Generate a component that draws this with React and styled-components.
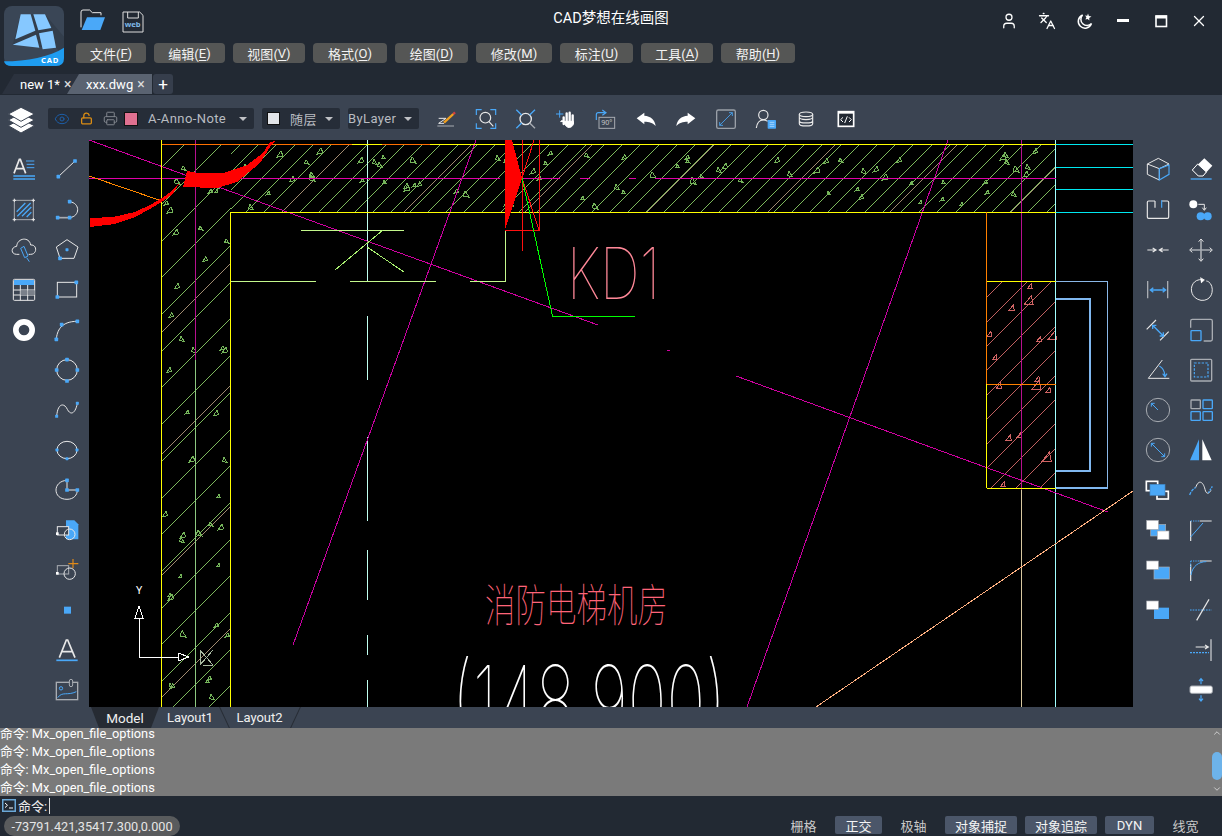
import React from 'react';
import styled, { createGlobalStyle } from 'styled-components';
import { User, Languages, X, Eye, LockOpen, Printer, ChevronUp, ChevronDown } from 'lucide-react';

const BLUE = '#4aa8f8';
const WHITE = '#e8e8e8';
const GRAY = '#a8acb2';
const FONT = 'Roboto, "Noto Sans CJK SC", sans-serif';

const GlobalStyle = createGlobalStyle`
  html, body { margin: 0; padding: 0; background: #222933; }
  * { box-sizing: border-box; }
`;

// --- layout ---
const Page = styled.div`
  width: 1222px;
  height: 836px;
  display: flex;
  flex-direction: column;
  overflow: hidden;
  background: #222933;
  color: #fff;
  font-family: ${FONT};
`;
const Header = styled.header`
  height: 74px;
  display: grid;
  grid-template-columns: 76px 1fr auto 1fr 76px;
  grid-template-rows: 42px 32px;
`;
const LogoBox = styled.div`
  grid-row: 1 / span 2;
  padding: 6px 0 0 4px;
`;
const QuickIcons = styled.div`
  display: flex;
  align-items: center;
  gap: 14px;
  padding: 1px 0 0 3px;
`;
const Title = styled.div`
  font-size: 14.5px;
  line-height: 38px;
`;
const WindowControls = styled.div`
  grid-column: 4 / span 2;
  display: flex;
  justify-content: flex-end;
  align-items: flex-start;
  gap: 14px;
  padding: 9px 11px 0 0;
`;
const WinIcon = styled.span`
  width: 24px;
  height: 24px;
  display: flex;
  align-items: center;
  justify-content: center;
`;
const MenuBar = styled.nav`
  grid-column: 2 / -1;
  display: flex;
  gap: 8px;
  padding-top: 1px;
`;
const MenuButton = styled.div`
  width: ${(p) => p.$w}px;
  height: 20px;
  display: flex;
  align-items: center;
  justify-content: center;
  background: #555655;
  border-radius: 4px;
  font-size: 13px;
  color: #f2f2f2;
  u { text-underline-offset: 2px; }
`;
const TabRow = styled.div`
  height: 21px;
  display: flex;
  padding-left: 2px;
`;
const DocTab = styled.div`
  height: 20px;
  display: flex;
  align-items: center;
  font-size: 13px;
  color: #fff;
  clip-path: polygon(0 100%, 12px 0, 100% 0, calc(100% - 12px) 100%);
  background: #2b323e;
  width: 78px;
  padding-left: 18px;
  span { margin-left: 4px; font-size: 14px; color: #ddd; }
`;
const ActiveTab = styled(DocTab)`
  background: #5a6371;
  width: 85px;
  margin-left: -13px;
  padding-left: 19px;
  clip-path: polygon(0 100%, 12px 0, 100% 0, 100% 100%);
`;
const AddTab = styled.div`
  width: 20px;
  height: 20px;
  margin-left: 1px;
  display: flex;
  align-items: center;
  justify-content: center;
  background: #363e4c;
  border-radius: 3px;
  font-size: 17px;
`;
const Toolbar = styled.div`
  height: 45px;
  display: flex;
  align-items: center;
  padding: 2px 0 0 7px;
  background: #3b4452;
`;
const LayerGroup = styled.div`
  width: ${(p) => p.$w}px;
  height: 21px;
  margin-left: ${(p) => p.$ml}px;
  display: flex;
  align-items: center;
  padding: 0 7px 0 ${(p) => p.$pl}px;
  background: #262d38;
  border-radius: 2px;
  font-size: 13px;
  color: #b9bcc1;
  letter-spacing: 0.4px;
`;
const GroupIcon = styled.span`
  width: 16px;
  height: 16px;
  margin-right: ${(p) => p.$mr}px;
  display: flex;
  align-items: center;
  justify-content: center;
`;
const Swatch = styled.span`
  width: ${(p) => p.$s}px;
  height: ${(p) => p.$s}px;
  margin-right: 10px;
  background: ${(p) => p.$c};
  border: 1px solid #111;
`;
const Caret = styled.i`
  margin-left: auto;
  border-left: 4px solid transparent;
  border-right: 4px solid transparent;
  border-top: 4px solid #c0c2c6;
`;
const ToolIcons = styled.div`
  display: flex;
  gap: 10px;
  margin-left: 12px;
`;
const Workspace = styled.div`
  height: 567px;
  display: flex;
`;
const SideBar = styled.aside`
  width: ${(p) => p.$w}px;
  flex-shrink: 0;
  display: flex;
  padding: 10px 0 0 ${(p) => p.$pl}px;
  background: #3b4452;
  overflow: hidden;
`;
const SideColumn = styled.div`
  width: 44px;
  display: flex;
  flex-direction: column;
`;
const SideCell = styled.div`
  height: 40px;
  flex-shrink: 0;
  display: flex;
  align-items: center;
  justify-content: center;
`;
const Canvas = styled.svg`
  width: 1044px;
  height: 567px;
  display: block;
  background: #000;
`;
const CadText = styled.text`
  font-family: Inter, "Noto Sans CJK SC", sans-serif;
  font-weight: 100;
`;
const LayoutBar = styled.div`
  height: 21px;
  display: flex;
  padding-left: 91px;
  background: #3b4452;
`;
const LayoutTab = styled.div`
  position: relative;
  width: ${(p) => p.$w}px;
  height: 21px;
  display: flex;
  align-items: center;
  justify-content: center;
  font-size: 13px;
  color: #f0f0f0;
  &::after {
    content: '';
    position: absolute;
    top: 0;
    right: ${(p) => p.$r}px;
    height: 100%;
    border-right: 1px solid #262b33;
    transform: skewX(${(p) => p.$lean}deg);
  }
`;
const ModelTab = styled.div`
  width: 68px;
  height: 21px;
  display: flex;
  align-items: center;
  justify-content: center;
  font-size: 13.5px;
  color: #f0f0f0;
  background: #262b33;
  clip-path: polygon(0 0, 100% 0, calc(100% - 8px) 100%, 8px 100%);
`;
const History = styled.div`
  position: relative;
  height: 68px;
  display: flex;
  flex-direction: column;
  justify-content: flex-end;
  overflow: hidden;
  background: #7a7a7a;
`;
const HistoryRow = styled.div`
  height: 18px;
  flex-shrink: 0;
  font-size: 12.8px;
  line-height: 20px;
  color: #fff;
`;
const ScrollTrack = styled.div`
  position: absolute;
  top: 0;
  right: 0;
  width: 10px;
  height: 68px;
  display: flex;
  flex-direction: column;
  align-items: center;
  color: #ddd;
`;
const ScrollThumb = styled.div`
  flex-shrink: 0;
  width: 10px;
  height: 28px;
  margin: 14px 0 4px;
  background: #6db3ea;
  border-radius: 5px;
`;
const CommandRow = styled.div`
  height: 19px;
  display: flex;
  align-items: center;
  padding-left: 2px;
  font-size: 13px;
  color: #eee;
  svg { margin-right: 2px; }
`;
const Cursor = styled.span`
  width: 1px;
  height: 16px;
  margin-left: 2px;
  background: #ddd;
`;
const StatusBar = styled.footer`
  height: 21px;
  display: flex;
  justify-content: space-between;
  padding: 1px 13px 0 4px;
`;
const Coords = styled.div`
  width: 176px;
  height: 20px;
  display: flex;
  align-items: center;
  justify-content: center;
  background: #595b5d;
  border-radius: 10px;
  font-size: 12.7px;
  color: #e6e6e6;
`;
const StatusItems = styled.div`
  display: flex;
  gap: 8px;
`;
const StatusItem = styled.div`
  height: 18px;
  min-width: 47px;
  padding: 0 10px;
  display: flex;
  align-items: center;
  justify-content: center;
  border-radius: 2px;
  font-size: 13px;
  color: ${(p) => (p.$on ? '#f4f4f4' : '#c8c8c8')};
  background: ${(p) => (p.$on ? '#4b5669' : 'transparent')};
  &:nth-child(6) { min-width: 49px; }
`;

// --- icon helpers: coordinates are 3x pixels, box centred on c ---
const IconSvg = styled.svg`
  width: ${(p) => p.$s || 30}px;
  height: ${(p) => p.$s || 30}px;
  display: block;
  fill: none;
  stroke: ${WHITE};
  stroke-width: 3;
`;
const Z = ({ c, children }) => (
  <IconSvg viewBox={`${c[0] - 45} ${c[1] - 45} 90 90`}>{children}</IconSvg>
);
const N = ({ x, y, r = 5.5 }) => (
  <rect x={x - r} y={y - r} width={r * 2} height={r * 2} rx="2" fill={BLUE} stroke="none" />
);
const Blue = ({ d, w = 3, dash }) => <path d={d} stroke={BLUE} strokeWidth={w} strokeDasharray={dash} />;
const Box = ({ x, y, w, h, fill = '#fff', stroke = GRAY, sw = 2 }) => (
  <rect x={x} y={y} width={w} height={h} fill={fill} stroke={stroke} strokeWidth={sw} />
);

const leftA = [
  <Z c={[72, 90]}>
    <path d="M42 100 L58 58 H61 L77 100 M48 86 H71" strokeWidth="5" />
    <Blue d="M78 63 H103 M80 73 H103 M80 83 H103" />
    <Blue d="M40 108 H105 M40 117 H105" w={4} />
  </Z>,
  <Z c={[72, 207]}>
    <rect x="43" y="178" width="57" height="58" stroke={GRAY} strokeWidth="3" />
    <Blue d="M50 212 L76 186 M52 226 L92 186 M66 226 L94 198 M80 228 L94 214" w={4} />
    <path d="M38 178 H48 M43 173 V183 M95 178 H105 M100 173 V183 M38 236 H48 M43 231 V241 M95 236 H105 M100 231 V241" />
  </Z>,
  <Z c={[72, 327]}>
    <path d="M58 340 H50 C32 340 32 318 50 316 C52 290 88 286 92 312 C112 310 112 340 92 340 H86" />
    <Blue d="M62 322 L72 316 L84 345 L74 350 Z M80 350 L88 362" />
  </Z>,
  <Z c={[72, 447]}>
    <rect x="40" y="415" width="64" height="63" rx="3" />
    <rect x="42" y="417" width="60" height="15" fill={BLUE} stroke="none" />
    <path d="M40 447 H104 M40 462 H104 M61 432 V478 M83 432 V478" />
    <rect x="62" y="448" width="20" height="14" fill="#7a808a" stroke="none" />
    <rect x="84" y="448" width="20" height="14" fill="#7a808a" stroke="none" />
  </Z>,
  <Z c={[72, 567]}>
    <circle cx="72" cy="567" r="24.5" strokeWidth="17" stroke="#fff" />
  </Z>,
];

const leftB = [
  <Z c={[204, 90]}>
    <path d="M178 110 L228 63" />
    <N x={178} y={110} /><N x={228} y={63} />
  </Z>,
  <Z c={[204, 207]}>
    <path d="M176 230 H212" stroke={GRAY} strokeWidth="5" />
    <path d="M212 182 C244 186 244 226 212 230" />
    <N x={176} y={230} /><N x={212} y={230} /><N x={212} y={182} />
  </Z>,
  <Z c={[204, 327]}>
    <path d="M204 296 L237 318 L225 352 H183 L172 318 Z" />
    <N x={204} y={326} r={4.5} /><N x={183} y={352} />
  </Z>,
  <Z c={[204, 447]}>
    <rect x="175" y="424" width="58" height="44" />
    <N x={232} y={424} /><N x={175} y={468} />
  </Z>,
  <Z c={[204, 567]}>
    <path d="M172 595 C174 570 185 541 235 541" />
    <N x={172} y={595} /><N x={188} y={551} /><N x={235} y={541} />
  </Z>,
  <Z c={[204, 687]}>
    <circle cx="204" cy="687" r="31" />
    <N x={204} y={656} /><N x={235} y={687} /><N x={204} y={720} /><N x={173} y={687} />
  </Z>,
  <Z c={[204, 807]}>
    <path d="M173 826 C176 785 196 785 205 805 C216 826 230 815 235 787" />
    <N x={173} y={826} r={4.5} /><N x={235} y={787} r={4.5} />
  </Z>,
  <Z c={[204, 57]}>
    <ellipse cx="204" cy="57" rx="30" ry="26" />
    <N x={174} y={57} r={4.5} /><N x={234} y={57} r={4.5} /><N x={204} y={83} r={4.5} />
  </Z>,
  <Z c={[204, 177]}>
    <path d="M204 148 C160 150 160 205 204 205 C224 205 235 192 235 177 H204 Z" />
    <N x={204} y={148} /><N x={204} y={177} /><N x={235} y={177} />
  </Z>,
  <Z c={[204, 297]}>
    <path d="M201 268 H226 L238 280 V325 H201 Z" fill={BLUE} stroke="none" />
    <rect x="175" y="287" width="34" height="25" fill="#3b4452" />
    <circle cx="212" cy="310" r="16" />
    <rect x="171" y="304" width="8" height="8" fill="#fff" stroke="none" />
  </Z>,
  <Z c={[204, 417]}>
    <rect x="175" y="404" width="34" height="25" stroke={GRAY} />
    <circle cx="212" cy="428" r="17" />
    <rect x="171" y="423" width="8" height="8" fill="#fff" stroke="none" />
    <path d="M222 384 V412 M208 398 H238" stroke="#e08a1a" strokeWidth="3.5" />
  </Z>,
  <Z c={[204, 537]}>
    <rect x="195" y="527" width="21" height="21" fill={BLUE} stroke="none" />
  </Z>,
  <Z c={[204, 657]}>
    <path d="M181 680 L202 627 H206 L228 680 M188 662 H221" strokeWidth="5" />
    <Blue d="M172 688 H236" w={5} />
  </Z>,
  <Z c={[204, 777]}>
    <rect x="172" y="754" width="64" height="52" stroke={GRAY} strokeWidth="4" />
    <circle cx="186" cy="772" r="5" stroke={BLUE} />
    <Blue d="M176 800 C190 780 205 795 232 782" />
    <rect x="211" y="745" width="10" height="22" rx="5" fill="#3b4452" stroke={GRAY} />
  </Z>,
];

const rightA = [
  <Z c={[84, 90]}>
    <path d="M85 55 L117 72 L88 86 L52 72 Z M52 72 V103 L88 120 V86" />
    <Blue d="M88 86 L117 75 V103 L88 120 Z" w={3.5} />
  </Z>,
  <Z c={[84, 207]}>
    <path d="M75 180 H56 Q52 180 52 184 V228 Q52 232 56 232 H112 Q116 232 116 228 V184 Q116 180 112 180 H95 M75 180 V200" strokeWidth="3.5" />
    <Blue d="M95 178 V200" w={3.5} />
  </Z>,
  <Z c={[84, 327]}>
    <path d="M52 327 H76 M68 321 L78 327 L68 333 M116 327 H90 M98 321 L88 327 L98 333" strokeWidth="3.5" />
  </Z>,
  <Z c={[84, 447]}>
    <path d="M53 420 V472 M113 420 V472" stroke={GRAY} strokeWidth="4" />
    <Blue d="M62 447 H106 M70 440 L61 447 L70 454 M98 440 L107 447 L98 454" w={4} />
  </Z>,
  <Z c={[84, 567]}>
    <path d="M50 565 L78 537 M90 598 L116 572" strokeWidth="3.5" />
    <Blue d="M68 553 L100 585 M68 564 V553 H79 M89 585 H100 V574" w={4} />
  </Z>,
  <Z c={[84, 687]}>
    <path d="M55 712 H118 M55 712 L97 657" strokeWidth="3" />
    <Blue d="M88 675 C98 680 104 692 105 705 M98 698 L105 707 L111 698" w={3.5} />
  </Z>,
  <Z c={[84, 807]}>
    <circle cx="84" cy="807" r="35" stroke={GRAY} />
    <Blue d="M84 807 L64 787 M64 797 V787 H74" w={3} />
  </Z>,
  <Z c={[84, 57]}>
    <circle cx="84" cy="57" r="35" stroke={GRAY} />
    <Blue d="M64 37 L104 77 M64 47 V37 H74 M94 77 H104 V67" w={3} />
  </Z>,
  <Z c={[84, 177]}>
    <Box x={49} y={151} w={34} h={28} fill="none" stroke="#fff" sw={5} />
    <Box x={81} y={181} w={34} h={23} fill="none" stroke="#fff" sw={5} />
    <Box x={60} y={160} w={45} h={33} fill={BLUE} stroke="#3f85c4" />
  </Z>,
  <Z c={[84, 297]}>
    <Box x={62} y={280} w={45} h={35} fill={BLUE} />
    <Box x={50} y={268} w={35} h={27} />
    <Box x={82} y={300} w={35} h={25} />
  </Z>,
  <Z c={[84, 417]}>
    <Box x={72} y={408} w={46} h={36} fill={BLUE} />
    <Box x={50} y={390} w={35} h={25} />
  </Z>,
  <Z c={[84, 537]}>
    <Box x={72} y={530} w={45} h={34} fill={BLUE} stroke="none" />
    <Box x={50} y={510} w={35} h={25} />
  </Z>,
];

const rightB = [
  <Z c={[216, 90]}>
    <path d="M226 55 L250 77 L222 108 H208 L190 90 Z" fill="#fff" stroke="none" />
    <path d="M206 72 L232 96 L222 108 H208 L190 90 Z" fill="#3b4452" stroke="#fff" />
    <Blue d="M185 117 H248" w={4} />
  </Z>,
  <Z c={[216, 207]}>
    <circle cx="193" cy="190" r="12" fill="#fff" stroke="none" />
    <circle cx="215" cy="226" r="12" fill={BLUE} stroke="none" />
    <circle cx="236" cy="226" r="12" fill={BLUE} stroke="none" />
    <path d="M208 190 H226 V206 M220 200 L226 208 L232 200" />
  </Z>,
  <Z c={[216, 327]}>
    <path d="M216 298 V358 M186 327 H246" stroke={GRAY} strokeWidth="5" />
    <path d="M209 302 L216 294 L223 302 M209 353 L216 361 L223 353 M190 320 L182 327 L190 334 M242 320 L250 327 L242 334" strokeWidth="3" />
  </Z>,
  <Z c={[216, 447]}>
    <path d="M220 416 C180 412 174 470 216 478 C258 482 258 424 232 420" strokeWidth="3" />
    <path d="M214 410 L226 417 L216 426" fill="#fff" />
  </Z>,
  <Z c={[216, 567]}>
    <path d="M185 560 V540 Q185 535 190 535 H245 Q250 535 250 540 V595 Q250 600 245 600 H224" stroke={GRAY} strokeWidth="4" />
    <rect x="186" y="569" width="30" height="30" rx="2" stroke={BLUE} strokeWidth="4" />
  </Z>,
  <Z c={[216, 687]}>
    <rect x="185" y="655" width="63" height="65" rx="3" stroke={GRAY} strokeWidth="4" />
    <rect x="196" y="666" width="41" height="42" stroke={BLUE} strokeDasharray="7 4" strokeWidth="3.5" />
  </Z>,
  <Z c={[216, 807]}>
    <rect x="186" y="777" width="28" height="26" rx="2" stroke={GRAY} strokeWidth="4" />
    <rect x="222" y="777" width="28" height="26" rx="2" stroke={BLUE} strokeWidth="4" />
    <rect x="186" y="812" width="28" height="26" rx="2" stroke={BLUE} strokeWidth="4" />
    <rect x="222" y="812" width="28" height="26" rx="2" stroke={BLUE} strokeWidth="4" />
  </Z>,
  <Z c={[216, 57]}>
    <path d="M210 25 V88 H183 Z" fill={BLUE} stroke="none" />
    <path d="M220 25 V88 H248 Z" fill="#fff" stroke="none" />
  </Z>,
  <Z c={[216, 177]}>
    <path d="M200 170 C208 145 222 150 228 175 C232 192 240 188 246 178" strokeWidth="3" />
    <Blue d="M182 192 C186 180 194 172 200 170" w={4} dash="9 3" />
    <Blue d="M238 186 L250 166" w={4} dash="6 3" />
  </Z>,
  <Z c={[216, 297]}>
    <path d="M185 270 V330 M212 270 H248" stroke={WHITE} strokeWidth="3.5" />
    <Blue d="M185 270 H212" w={3} dash="4 3" />
    <Blue d="M185 318 L222 276" w={3} />
  </Z>,
  <Z c={[216, 417]}>
    <path d="M185 400 V450 M212 390 H248" stroke={WHITE} strokeWidth="3.5" />
    <Blue d="M185 390 H212 M185 390 V410" w={3} dash="4 3" />
    <Blue d="M186 432 C190 405 210 392 232 392" w={3} />
  </Z>,
  <Z c={[216, 537]}>
    <Blue d="M183 537 H248" w={3} dash="5 3" />
    <path d="M203 568 L240 505" strokeWidth="3.5" />
  </Z>,
  <Z c={[216, 657]}>
    <path d="M246 625 V690" stroke={GRAY} strokeWidth="5" />
    <path d="M200 648 H236 M228 642 L238 648 L228 654" strokeWidth="3.5" />
    <Blue d="M183 665 H240" w={3.5} dash="6 3" />
  </Z>,
  <Z c={[216, 777]}>
    <rect x="183" y="765" width="67" height="22" rx="5" fill="#fff" stroke={GRAY} />
    <Blue d="M216 744 V760 M210 750 L216 743 L222 750 M216 793 V809 M210 803 L216 810 L222 803" w={3.5} />
  </Z>,
];

const toolIcons = [
  <Z c={[78, 357]}>
    <path d="M56 355 H78 L56 370 H72" strokeWidth="3" />
    <path d="M52 378 H102" stroke={GRAY} strokeWidth="3" />
    <path d="M72 368 L100 342" stroke="#f0a020" strokeWidth="7" />
    <path d="M100 342 L105 337" stroke="#d84040" strokeWidth="7" />
  </Z>,
  <Z c={[201, 357]}>
    <Blue d="M172 345 V329 H188 M214 329 H230 V345 M172 370 V385 H188 M214 385 H230 V370" w={3.5} />
    <circle cx="199" cy="353" r="16" strokeWidth="3.5" />
    <path d="M210 365 L223 379" strokeWidth="3.5" />
  </Z>,
  <Z c={[321, 357]}>
    <circle cx="320" cy="357" r="17" strokeWidth="4" />
    <Blue d="M308 345 L292 329 M332 345 L348 329 M308 369 L292 385" w={4} />
    <path d="M332 369 L348 385" stroke={GRAY} strokeWidth="4" />
  </Z>,
  <Z c={[444, 357]}>
    <path d="M437 352 V372 M446 340 V368 M455 338 V368 M464 346 V370" stroke="#fff" strokeWidth="7" strokeLinecap="round" />
    <path d="M428 365 C432 358 436 362 440 372 C446 386 462 386 466 372 V364 H436 Z" fill="#fff" stroke="#fff" />
    <Blue d="M425 331 V353 M414 342 H436" w={3} />
  </Z>,
  <Z c={[564, 357]}>
    <Blue d="M535 360 V344 Q535 338 541 338 H560 M553 330 L564 338 L553 346" w={3.5} />
    <rect x="543" y="352" width="47" height="33" stroke={GRAY} strokeWidth="3" />
    <text x="566" y="376" fontSize="21" textAnchor="middle" fill="#c8c8c8" stroke="none" fontFamily="Noto Sans, sans-serif">90°</text>
  </Z>,
  <Z c={[681, 357]}>
    <path d="M653 355 L676 338 V347 C695 348 708 360 710 378 C702 368 690 365 676 365 V373 Z" fill="#fff" stroke="none" />
  </Z>,
  <Z c={[801, 357]}>
    <path d="M829 355 L806 338 V347 C787 348 774 360 772 378 C780 368 792 365 806 365 V373 Z" fill="#fff" stroke="none" />
  </Z>,
  <Z c={[921, 357]}>
    <Blue d="M902 376 L940 338 M902 366 V376 H912 M930 338 H940 V348" w={2.5} />
    <rect x="893" y="330" width="56" height="55" rx="5" stroke="#9aa0a8" strokeWidth="4" />
  </Z>,
  <Z c={[1041, 357]}>
    <circle cx="1033" cy="345" r="14" strokeWidth="3.5" />
    <path d="M1012 384 C1014 368 1022 360 1033 360 C1038 360 1042 362 1046 364" strokeWidth="3.5" />
    <rect x="1046" y="360" width="25" height="26" rx="2" fill={BLUE} stroke="none" />
    <path d="M1052 367 H1066 M1052 373 H1066 M1052 379 H1066" stroke="#cfe8ff" strokeWidth="2" />
  </Z>,
  <Z c={[1161, 357]}>
    <ellipse cx="1161" cy="343" rx="20" ry="7" strokeWidth="3.5" />
    <path d="M1141 343 V371 C1141 380 1181 380 1181 371 V343 M1141 352 C1141 361 1181 361 1181 352 M1141 362 C1141 371 1181 371 1181 362" strokeWidth="3.5" />
  </Z>,
  <Z c={[1281, 357]}>
    <rect x="1258" y="335" width="46" height="44" fill="#222933" stroke="#fff" strokeWidth="5" />
    <path d="M1258 337 H1304" stroke="#fff" strokeWidth="8" />
    <path d="M1272 352 L1265 359 L1272 366 M1290 352 L1297 359 L1290 366 M1285 349 L1277 369" strokeWidth="3" stroke="#fff" />
  </Z>,
];

const LogoSvg = styled.svg`
  width: 60px;
  height: 60px;
  display: block;
`;
const Logo = () => (
  <LogoSvg viewBox="12 18 180 180">
    <rect x="12" y="18" width="180" height="180" rx="24" fill="#3a4656" />
    <path d="M38 135 L62 43 H135 L192 110 V170 L168 143 Z" fill="#333e4c" />
    <path d="M62 43 H92 L106 92 L46 118 Z" fill="#86c8ff" />
    <path d="M100 43 H135 L154 84 L115 91 Z" fill="#86c8ff" />
    <path d="M38 134 L108 104 L118 143 Z" fill="#86c8ff" />
    <path d="M117 100 L158 92 L168 143 L128 148 Z" fill="#86c8ff" />
    <path d="M12 184 C80 184 150 170 192 143 V174 Q192 198 168 198 H36 Q14 198 12 184 Z" fill="#1e9cf0" />
    <text x="150" y="190" fontSize="23" fontWeight="700" fill="#fff" textAnchor="middle" letterSpacing="2" fontFamily="Noto Sans, sans-serif">CAD</text>
  </LogoSvg>
);

const Folder = () => (
  <IconSvg $s={28} viewBox="238 30 84 84">
    <path d="M244 88 V42 Q244 36 250 36 H270 L278 44 H304 V52" stroke="#e8e8e8" strokeWidth="3" />
    <path d="M262 58 H316 L302 96 H246 Z" fill="#4aa8f8" stroke="none" />
  </IconSvg>
);
const WebDisk = () => (
  <IconSvg $s={24} viewBox="360 26 72 72">
    <path d="M366 32 H416 L426 42 V92 H366 Z" stroke="#ddd" strokeWidth="3" />
    <path d="M380 32 V50 H412 V32" stroke="#ddd" strokeWidth="3" />
    <text x="395" y="76" fontSize="23" fontWeight="700" fill="#7fb8e8" stroke="none" textAnchor="middle" fontFamily="Noto Sans, sans-serif">web</text>
  </IconSvg>
);
const Layers = () => (
  <IconSvg $s={28} viewBox="24 318 84 84">
    <path d="M66 360 L106 380 L66 402 L28 380 Z" fill="#fff" stroke="#3b4452" strokeWidth="3" />
    <path d="M66 343 L106 363 L66 385 L28 363 Z" fill="#fff" stroke="#3b4452" strokeWidth="3" />
    <path d="M66 325 L106 345 L66 367 L28 345 Z" fill="#fff" stroke="#3b4452" strokeWidth="3" />
  </IconSvg>
);

// --- CAD drawing, page coordinates ---
const rng = (seed) => () => {
  seed = (seed * 16807) % 2147483647;
  return (seed % 10000) / 10000;
};
const makeTriangles = (seed, count, x0, x1, y0, y1) => {
  const r = rng(seed);
  return Array.from({ length: count }, () => {
    const x = Math.round(x0 + r() * (x1 - x0));
    const y = Math.round(y0 + r() * (y1 - y0));
    const s = 1.6 + r() * 1.8;
    const f = r() > 0.5 ? 1 : -1;
    return `${x},${y - s} ${x + f * s * 1.3},${y + s} ${x - f * s * 0.6},${y + s * 0.6}`;
  });
};
const range = (from, to, step) => {
  const out = [];
  for (let v = from; v <= to; v += step) out.push(Math.round(v));
  return out;
};
const pinkTriangles = [
  [299, 439], [296, 480], [245, 503], [178, 582], [327, 597], [367, 586], [194, 652], [322, 716],
  [207, 737], [319, 735], [355, 750], [236, 893], [268, 885], [350, 950], [218, 1033],
].map(([zx, zy], i) => {
  const x = 930 + zx / 3;
  const y = 140 + zy / 3;
  const s = i % 4 === 1 ? 4.5 : 2.5;
  return `${x - s},${y + s} ${x + s},${y + s} ${x + s * 0.6},${y - s}`;
});
const Diagonal = ({ c, stroke }) => (
  <line x1={c - 707 + 0.5} y1="707.5" x2={c - 140 + 0.5} y2="140.5" stroke={stroke} />
);
const tanLines = range(493, 1300, 121.5);

const Drawing = () => (
  <Canvas viewBox="89 140 1044 567" fill="none" shapeRendering="crispEdges">
    <defs>
      <clipPath id="wallTop"><rect x="231" y="145" width="825" height="67" /></clipPath>
      <clipPath id="wallLeft"><rect x="162" y="145" width="69" height="562" /></clipPath>
      <clipPath id="block"><rect x="987" y="282" width="69" height="206" /></clipPath>
    </defs>

    <g clipPath="url(#wallTop)">
      {range(384, 1300, 18.2).map((c) => <Diagonal key={c} c={c} stroke="#7cb85c" />)}
    </g>
    <g clipPath="url(#wallLeft)">
      {range(328.2, 950, 36.7).map((c) => <Diagonal key={c} c={c} stroke="#7cb85c" />)}
    </g>
    <g clipPath="url(#wallTop)">
      {tanLines.map((c) => <Diagonal key={c} c={c} stroke="#a08a70" />)}
    </g>
    <g clipPath="url(#wallLeft)">
      {tanLines.map((c) => <Diagonal key={c} c={c} stroke="#a08a70" />)}
    </g>
    <g clipPath="url(#block)">
      {range(1210, 1580, 24.4).map((c) => <Diagonal key={c} c={c} stroke="#c06060" />)}
    </g>

    {makeTriangles(7, 75, 235, 1050, 150, 208).map((p) => <polygon key={p} points={p} stroke="#74b45a" />)}
    {makeTriangles(31, 42, 166, 228, 150, 700).map((p) => <polygon key={p} points={p} stroke="#74b45a" />)}
    {pinkTriangles.map((p) => <polygon key={p} points={p} stroke="#d06464" />)}

    <path d="M367 140 V212 M367 200 V282 M367 316 V380 M367 437 V521 M367 550 V600 M367 635 V655 M367 680 V707" stroke="#c0fff0" />
    <path d="M1055.5 140 V707" stroke="#a0ffff" />
    <path d="M1056 144.5 H1133 M1056 167.5 H1133 M1056 189.5 H1133 M1056 212.5 H1133" stroke="#00e8f0" />

    <path d="M195.5 140 V360" stroke="#b8108f" />
    <path d="M195.5 360 V707" stroke="#8cc880" />
    <path d="M1021.5 140 V490" stroke="#b8108f" />
    <path d="M1021.5 490 V707" stroke="#d8c8a0" />
    <path d="M89 178.5 H500 M505 178.5 H560 M580 178.5 H590 M629 178.5 H636 M655 178.5 H1056" stroke="#e000a8" />
    <path d="M89 140 L598 325 M667 350 L670 351 M736 376 L1108 512" stroke="#d000a0" />
    <path d="M293 645 L476 140 M747 707 L948 140" stroke="#c800a0" />
    <path d="M89 176 L162 201" stroke="#ff8800" />

    <path d="M161.5 140 V707 M230.5 212 V707" stroke="#ffff00" />
    <path d="M162 144.5 H1056 M231 212.5 H1056" stroke="#ffff00" />
    <path d="M162 144.5 H352 M382 144.5 H430" stroke="#ff7000" />

    <path d="M301 230.5 H404 M231 281.5 H316 M350 281.5 H436 M470 281.5 H505.5 V230" stroke="#c4f88c" />
    <path d="M335 270 L383 230 M367 247 L404 272" stroke="#a8f070" />

    <path d="M90 218 L113 217 L135 212 L150 205 L162 198 L172 191 L180 182 L173 194 L163 201 L150 209 L135 217 L115 224 L90 227 Z" fill="#ff0000" />
    <path d="M187 171 L197 173 L223 173 L247 165 L263 153 L270 142 L275 141 L270 147 L260 163 L237 182 L217 188 L183 187 Z" fill="#ff0000" />
    <path d="M505 140 L512 140 L522 178 L505 230 Z" fill="#ff0000" />
    <path d="M505 230.5 H539 V140 M522 140 V251 M534 140 L522 178 L539 230" stroke="#ff1010" />
    <path d="M522 178 L552.5 316 H635" stroke="#00ff00" />

    <path d="M986.5 212 V384 M987 384.5 H1056" stroke="#ff8000" />
    <path d="M986.5 384 V488 M987 281.5 H1056 M987 488.5 H1056" stroke="#ffff00" />
    <path d="M1056 281.5 H1107.5 V488 H1056" stroke="#8ab8e8" />
    <path d="M1056 299 H1089.5 V471 H1056" stroke="#80b8f0" strokeWidth="2" />
    <path d="M1056 488 H1107" stroke="#80b8f0" strokeWidth="2" />
    <path d="M1133 491 L816 707" stroke="#ffb080" />

    <path d="M139 618 V657 H178 M139 606 L135 618 H143 Z M178 653 V661 L189 657 Z" stroke="#fff" />
    <path d="M200 650 L213 665 M213 650 L200 665 M200 650 V665 M203 665 H213" stroke="#a8b8a0" />
    <text x="139" y="594" fontSize="11" fill="#fff" textAnchor="middle" fontFamily="Noto Sans, sans-serif">Y</text>

    <CadText x="567" y="299" fontSize="71" fill="#ff8898" textLength="93" lengthAdjust="spacingAndGlyphs">KD1</CadText>
    <CadText x="485" y="622" fontSize="45" fill="#ff6478" textLength="183" lengthAdjust="spacingAndGlyphs">消防电梯机房</CadText>
    <CadText x="452" y="738" fontSize="100" fill="#fff" textLength="274" lengthAdjust="spacingAndGlyphs">(148.900)</CadText>
  </Canvas>
);

const MoonIcon = () => (
  <svg width="18" height="18" viewBox="0 0 18 18" fill="none">
    <path d="M15.5 11.6A6.8 6.8 0 1 1 6.6 3 5.6 5.6 0 0 0 15.5 11.6Z" stroke="#fff" strokeWidth="1.5" />
    <path d="M12 1.5 L12.9 4 L15.5 4.6 L13.2 6 L13.4 8.6 L11.6 6.9 L9.4 7.6 L10.4 5.3 L9 3.4 L11.2 3.8 Z" fill="#fff" />
  </svg>
);
const MinIcon = () => (
  <svg width="14" height="14" viewBox="0 0 14 14"><rect x="1" y="5" width="12" height="3" fill="#fff" /></svg>
);
const MaxIcon = () => (
  <svg width="14" height="14" viewBox="0 0 14 14">
    <rect x="2" y="2" width="10.5" height="10.5" fill="none" stroke="#fff" strokeWidth="1.6" />
    <rect x="1.5" y="1.5" width="11.5" height="3" fill="#fff" />
  </svg>
);
const PromptIcon = () => (
  <svg width="14" height="13" viewBox="0 0 14 13" fill="none">
    <rect x="0.75" y="0.75" width="12.5" height="11.5" stroke="#6aa8d8" strokeWidth="1.5" />
    <path d="M3 4 L5.5 6.3 L3 8.6 M7 9 H11" stroke="#fff" strokeWidth="1" />
  </svg>
);

const menus = [
  ['文件', 'F', 70], ['编辑', 'E', 71], ['视图', 'V', 72], ['格式', 'O', 74], ['绘图', 'D', 73],
  ['修改', 'M', 76], ['标注', 'U', 73], ['工具', 'A', 72], ['帮助', 'H', 74],
];
const statusItems = [
  ['栅格', false], ['正交', true], ['极轴', false], ['对象捕捉', true], ['对象追踪', true], ['DYN', true], ['线宽', false],
];

const App = () => (
  <Page>
    <GlobalStyle />
    <Header>
      <LogoBox><Logo /></LogoBox>
      <QuickIcons><Folder /><WebDisk /></QuickIcons>
      <Title>CAD梦想在线画图</Title>
      <WindowControls>
        <WinIcon><User size={18} color="#fff" strokeWidth={1.7} /></WinIcon>
        <WinIcon><Languages size={18} color="#fff" strokeWidth={1.7} /></WinIcon>
        <WinIcon><MoonIcon /></WinIcon>
        <WinIcon><MinIcon /></WinIcon>
        <WinIcon><MaxIcon /></WinIcon>
        <WinIcon><X size={18} color="#fff" strokeWidth={1.7} /></WinIcon>
      </WindowControls>
      <MenuBar>
        {menus.map(([label, key, w]) => (
          <MenuButton key={key} $w={w}>{label}(<u>{key}</u>)</MenuButton>
        ))}
      </MenuBar>
    </Header>

    <TabRow>
      <DocTab>new 1*<span>×</span></DocTab>
      <ActiveTab>xxx.dwg<span>×</span></ActiveTab>
      <AddTab>+</AddTab>
    </TabRow>

    <Toolbar>
      <Layers />
      <LayerGroup $w={206} $ml={13} $pl={6}>
        <GroupIcon $mr={8}><Eye size={16} color="#1d5ea8" strokeWidth={1.5} /></GroupIcon>
        <GroupIcon $mr={8}><LockOpen size={13} color="#d98c14" strokeWidth={2.4} /></GroupIcon>
        <GroupIcon $mr={6}><Printer size={15} color="#80858c" strokeWidth={1.6} /></GroupIcon>
        <Swatch $s={14} $c="#e07090" />
        A-Anno-Note
        <Caret />
      </LayerGroup>
      <LayerGroup $w={78} $ml={8} $pl={5}>
        <Swatch $s={13} $c="#e2e4e8" />
        随层
        <Caret />
      </LayerGroup>
      <LayerGroup $w={71} $ml={8} $pl={0}>
        ByLayer
        <Caret />
      </LayerGroup>
      <ToolIcons>
        {toolIcons.map((icon, i) => <React.Fragment key={i}>{icon}</React.Fragment>)}
      </ToolIcons>
    </Toolbar>

    <Workspace>
      <SideBar $w={89} $pl={2}>
        <SideColumn>{leftA.map((icon, i) => <SideCell key={i}>{icon}</SideCell>)}</SideColumn>
        <SideColumn>{leftB.map((icon, i) => <SideCell key={i}>{icon}</SideCell>)}</SideColumn>
      </SideBar>
      <Drawing />
      <SideBar $w={89} $pl={3}>
        <SideColumn>{rightA.map((icon, i) => <SideCell key={i}>{icon}</SideCell>)}</SideColumn>
        <SideColumn>{rightB.map((icon, i) => <SideCell key={i}>{icon}</SideCell>)}</SideColumn>
      </SideBar>
    </Workspace>

    <LayoutBar>
      <ModelTab>Model</ModelTab>
      <LayoutTab $w={62} $r={-4} $lean={25}>Layout1</LayoutTab>
      <LayoutTab $w={77} $r={2} $lean={-25}>Layout2</LayoutTab>
    </LayoutBar>

    <History>
      {[0, 1, 2, 3].map((i) => <HistoryRow key={i}>命令: Mx_open_file_options</HistoryRow>)}
      <ScrollTrack>
        <ChevronUp size={10} />
        <ScrollThumb />
        <ChevronDown size={10} />
      </ScrollTrack>
    </History>

    <CommandRow><PromptIcon />命令:<Cursor /></CommandRow>

    <StatusBar>
      <Coords>-73791.421,35417.300,0.000</Coords>
      <StatusItems>
        {statusItems.map(([label, on]) => <StatusItem key={label} $on={on}>{label}</StatusItem>)}
      </StatusItems>
    </StatusBar>
  </Page>
);

export default App;
